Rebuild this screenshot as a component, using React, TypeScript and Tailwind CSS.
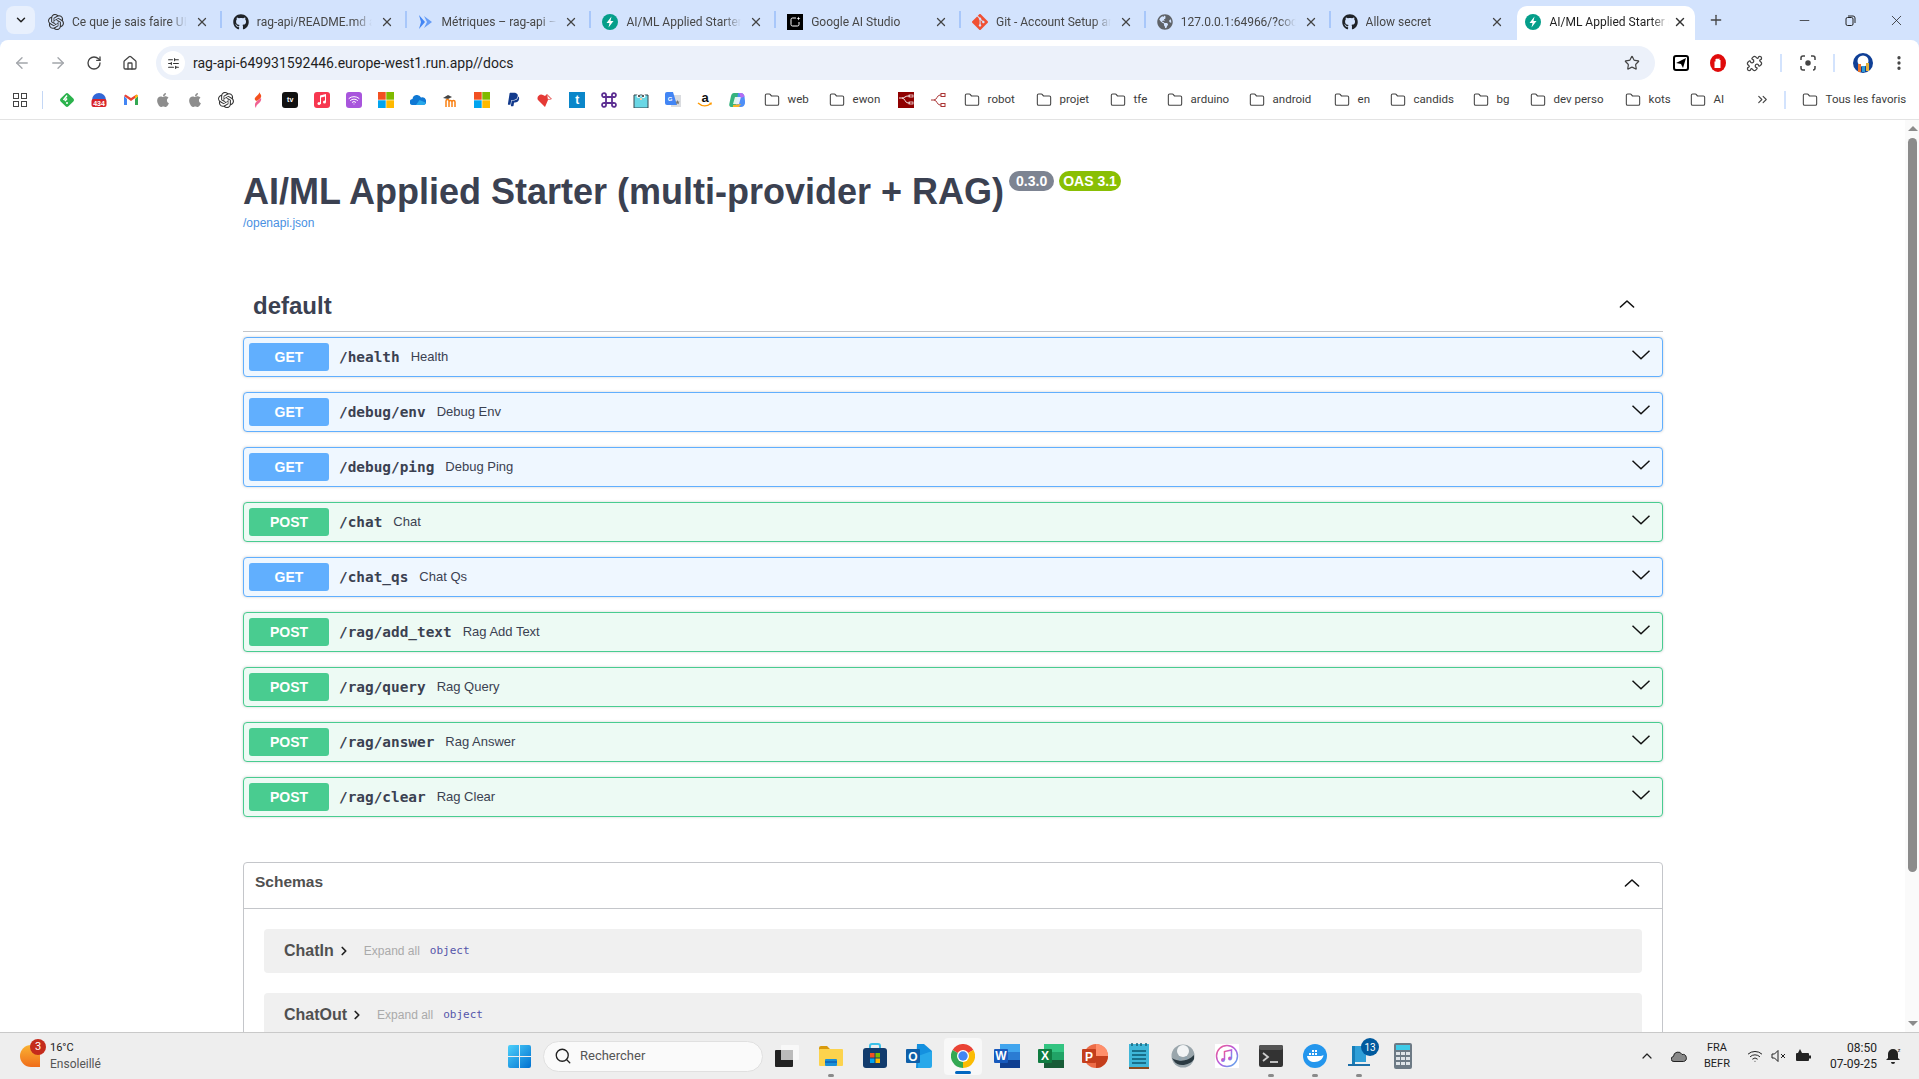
import type { ReactNode } from "react";
import {
  ArrowLeft,
  ArrowRight,
  ChevronDown,
  ChevronRight,
  ChevronUp,
  ChevronsRight,
  EllipsisVertical,
  Folder,
  House,
  Minus,
  Plus,
  Puzzle,
  RotateCw,
  Search,
  SlidersHorizontal,
  Star,
  Wifi,
  X,
} from "lucide-react";
import { FaApple, FaGithub, FaGlobeAmericas, FaPaypal } from "react-icons/fa";
import { SiGit, SiOpenai } from "react-icons/si";

const FastApi = () => (
  <svg width="16" height="16" viewBox="0 0 16 16">
    <circle cx="8" cy="8" r="8" fill="#059e8a" />
    <path d="M9.5 2.5 4.5 9h3l-1 4.5L11.5 7h-3z" fill="#fff" />
  </svg>
);

const CloudRun = () => (
  <svg width="16" height="16" viewBox="0 0 16 16">
    <path d="M1 1l6 7-6 7 2-7z" fill="#4285f4" />
    <path d="M6 2l8 6-8 6 3-6z" fill="#669df6" />
  </svg>
);

const AiStudio = () => (
  <svg width="16" height="16" viewBox="0 0 16 16">
    <rect width="16" height="16" fill="#000" />
    <path d="M9 4H5.5A1.5 1.5 0 0 0 4 5.500v5A1.500 1.500 0 0 0 5.500 12h5a1.500 1.500 0 0 0 1.500-1.500V8" fill="none" stroke="#fff" />
    <path d="M11.500 2.500c.2 1.300.7 1.800 2 2-1.300.2-1.800.7-2 2-.2-1.300-.7-1.800-2-2 1.300-.2 1.800-.7 2-2z" fill="#fff" />
  </svg>
);

type Tab = { icon: ReactNode; title: string };

const tabs: Tab[] = [
  { icon: <SiOpenai size={16} color="#333" />, title: "Ce que je sais faire UI/UX" },
  { icon: <FaGithub size={16} color="#1f2328" />, title: "rag-api/README.md at main" },
  { icon: <CloudRun />, title: "Métriques – rag-api – Cloud" },
  { icon: <FastApi />, title: "AI/ML Applied Starter (multi" },
  { icon: <AiStudio />, title: "Google AI Studio" },
  { icon: <SiGit size={16} color="#f05033" />, title: "Git - Account Setup and Config" },
  { icon: <FaGlobeAmericas size={16} color="#5f6368" />, title: "127.0.0.1:64966/?code=abc" },
  { icon: <FaGithub size={16} color="#1f2328" />, title: "Allow secret" },
];

function TabItem({ tab, last }: { tab: Tab; last: boolean }) {
  return (
    <div
      className={`flex h-[34px] w-[184.8px] shrink-0 items-center pb-[2px] pl-[11px] pr-[11px] ${
        last
          ? ""
          : "border-r-2 border-[#a8c7fa] [border-image:linear-gradient(to_bottom,transparent_18%,#a8c7fa_18%,#a8c7fa_65%,transparent_65%)_1]"
      }`}
    >
      <span className="flex w-4 shrink-0 justify-center">{tab.icon}</span>
      <span className="ml-2 w-[115px] overflow-hidden whitespace-nowrap text-xs text-[#474747] [mask-image:linear-gradient(to_right,black_85%,transparent)]">
        {tab.title}
      </span>
      <X size={14} strokeWidth={2.2} className="ml-auto text-[#444]" />
    </div>
  );
}

const GmailIcon = () => (
  <svg width="16" height="16" viewBox="0 0 16 16">
    <path d="M1 4v9h3V7z" fill="#4285f4" />
    <path d="M15 4v9h-3V7z" fill="#34a853" />
    <path d="M1 4l7 5 7-5-1.500-1.500L8 6 2.500 2.500z" fill="#ea4335" />
    <path d="M12 4v3l3-3-1-1.500z" fill="#fbbc04" />
  </svg>
);

const FeedlyIcon = () => (
  <svg width="16" height="16" viewBox="0 0 16 16">
    <rect x="2.500" y="2.500" width="11" height="11" rx="2" transform="rotate(45 8 8)" fill="#2bb24c" />
    <path d="M8 3.500 4.500 8M8 6.500 6 9M7 11h2" stroke="#fff" strokeWidth="1.500" fill="none" />
  </svg>
);

const BadgeIcon = () => (
  <svg width="16" height="16" viewBox="0 0 16 16">
    <path d="M1 8a7 7 0 0 1 14 0z" fill="#3367d6" />
    <rect x="0.500" y="7" width="15" height="8" rx="2" fill="#d8232a" />
    <text x="8" y="13.500" textAnchor="middle" fontSize="7" fontWeight="700" fill="#fff" fontFamily="Liberation Sans">434</text>
  </svg>
);

const MsIcon = ({ size = 16 }: { size?: number }) => (
  <svg width={size} height={size} viewBox="0 0 16 16">
    <rect width="7.700" height="7.700" fill="#f25022" />
    <rect x="8.300" width="7.700" height="7.700" fill="#7fba00" />
    <rect y="8.300" width="7.700" height="7.700" fill="#00a4ef" />
    <rect x="8.300" y="8.300" width="7.700" height="7.700" fill="#ffb900" />
  </svg>
);

const FlameIcon = () => (
  <svg width="16" height="16" viewBox="0 0 16 16">
    <path d="M9 0c1 2-3 4-4 6-.8 1.600 0 2.500 2 3 2-2 5-3 4-6z" fill="#f4511e" />
    <path d="M11 6c1 3-2 5-4 7-.5.7-1 1.500-1 3-2-3-1-5 1-7z" fill="#f06292" />
  </svg>
);

const AppIcon = ({ bg, children }: { bg: string; children: ReactNode }) => (
  <span className={`flex h-4 w-4 items-center justify-center rounded-[3px] ${bg}`}>{children}</span>
);

const MusicNote = () => (
  <svg width="10" height="11" viewBox="0 0 10 11" fill="#fff">
    <path d="M3 1.500 9 0v8H8V2.500L4 3.500V10H3z" />
    <circle cx="2" cy="9.500" r="1.500" />
    <circle cx="7.500" cy="8" r="1.500" />
  </svg>
);

const OneDriveIcon = () => (
  <svg width="16" height="16" viewBox="0 0 16 16">
    <path d="M3 13a3 3 0 0 1-.5-6A4.500 4.500 0 0 1 11 5.500a3.500 3.500 0 0 1 2.500 7.500z" fill="#0f78d4" />
    <path d="M6 13l3.500-5 6 2.500c.5 1.500-.5 2.500-2 2.500z" fill="#28a8ea" />
  </svg>
);

const MoodleIcon = () => (
  <svg width="16" height="16" viewBox="0 0 16 16">
    <path d="M1 6l5-3 4 2-4 2z" fill="#444" />
    <path d="M4 15V9c0-2 3-2 3 0v6M7 10c0-2 3-2 3 0v5M10 10c0-2 3-2 3 0v5" fill="none" stroke="#f98012" strokeWidth="1.500" />
  </svg>
);

const HeartTagIcon = () => (
  <svg width="16" height="16" viewBox="0 0 16 16">
    <path d="M8 15 1 8c-2-3 2-7 5-5l2 1 2-2 5 5-4 1z" fill="#e53935" />
    <path d="M10 3l4 4-3 .5z" fill="#fff" stroke="#e57373" strokeWidth=".5" />
  </svg>
);

const CommandIcon = () => (
  <svg width="16" height="16" viewBox="0 0 16 16" fill="none" stroke="#5b2d91" strokeWidth="1.800">
    <path d="M5 5h6v6H5zM5 5H3.500A2 2 0 1 1 5 3.500zM11 5V3.500A2 2 0 1 1 12.500 5zM11 11h1.500a2 2 0 1 1-1.500 1.500zM5 11v1.500A2 2 0 1 1 3.500 11z" />
  </svg>
);

const GopherIcon = () => (
  <svg width="16" height="16" viewBox="0 0 16 16">
    <path d="M1 3h14v13H1z" fill="#6ad7e5" stroke="#37474f" />
    <circle cx="5.500" cy="4" r="2" fill="#fff" />
    <circle cx="10.500" cy="4" r="2" fill="#fff" />
    <circle cx="6" cy="4" r="1" fill="#222" />
    <circle cx="10" cy="4" r="1" fill="#222" />
    <path d="M7 6h2v2H7z" fill="#f6d2a2" />
  </svg>
);

const TranslateIcon = () => (
  <svg width="16" height="16" viewBox="0 0 16 16">
    <rect x="6" y="3" width="10" height="12" fill="#dadce0" />
    <path d="M0 2a2 2 0 0 1 2-2h6l4 13H2a2 2 0 0 1-2-2z" fill="#4285f4" />
    <text x="5" y="9" textAnchor="middle" fontSize="6" fontWeight="700" fill="#fff" fontFamily="Liberation Sans">G</text>
    <path d="M12.500 8l.7 1.500 1.500.2-1.100 1 .3 1.600-1.400-.8-1.400.8.3-1.600-1.100-1 1.500-.2z" fill="#777" />
  </svg>
);

const AmazonIcon = () => (
  <svg width="16" height="16" viewBox="0 0 16 16">
    <text x="8" y="9.500" textAnchor="middle" fontSize="13" fontWeight="700" fill="#111" fontFamily="Liberation Sans">a</text>
    <path d="M1 11c4 3.500 9 3.500 13 .5" stroke="#f90" strokeWidth="1.400" fill="none" />
    <path d="M12 10.800l3-.3-.8 2.700z" fill="#f90" />
  </svg>
);

const CopilotIcon = () => (
  <svg width="16" height="16" viewBox="0 0 16 16">
    <path d="M5 1h5l-3 14H3c-3 0-3-2-2.500-4L2 4c.5-2 1.500-3 3-3z" fill="#36b37e" />
    <path d="M9 1h3c2 0 3 1.500 3.500 3.500L16 9c.5 3-1 6-4 6H7z" fill="#4f8ff7" />
    <path d="M6 5h6l-2 7H4z" fill="#fff" opacity=".85" />
    <path d="M10 1h2c2 0 3 2 3.500 3.500L12 6z" fill="#b66df2" />
    <path d="M4 15h6l2-3-8 1z" fill="#f7b32b" />
  </svg>
);

const NodeRedSquare = () => (
  <svg width="16" height="16" viewBox="0 0 16 16">
    <rect width="16" height="16" fill="#8f0000" />
    <path d="M1 6h3c3 0 3 5 6 5h2M4 6c3 0 3-2 6-2h2" stroke="#fff" strokeWidth=".9" fill="none" />
    <rect x="11" y="3" width="4" height="2" fill="none" stroke="#fff" strokeWidth=".7" />
    <rect x="11" y="10" width="4" height="2" fill="none" stroke="#fff" strokeWidth=".7" />
  </svg>
);

const NodeRedLine = () => (
  <svg width="16" height="16" viewBox="0 0 16 16" fill="none" stroke="#a33" strokeWidth="1">
    <path d="M1 8h3c3 0 3 5 6 5h1M4 8c3 0 3-5 6-5h1" />
    <rect x="11" y="1.500" width="4" height="3" />
    <rect x="11" y="11.500" width="4" height="3" />
  </svg>
);

const favIcons: ReactNode[] = [
  <FeedlyIcon />,
  <BadgeIcon />,
  <GmailIcon />,
  <FaApple size={16} color="#8d8d8d" />,
  <FaApple size={16} color="#8d8d8d" />,
  <SiOpenai size={16} color="#333" />,
  <FlameIcon />,
  <AppIcon bg="bg-[#111]">
    <span className="font-['Liberation_Sans'] text-[7px] font-bold leading-none text-white"> tv</span>
  </AppIcon>,
  <AppIcon bg="bg-[#f7374f]">
    <MusicNote />
  </AppIcon>,
  <AppIcon bg="bg-[#a855dc]">
    <Wifi size={12} color="#fff" />
  </AppIcon>,
  <MsIcon />,
  <OneDriveIcon />,
  <MoodleIcon />,
  <MsIcon />,
  <FaPaypal size={15} color="#123a8c" />,
  <HeartTagIcon />,
  <span className="flex h-4 w-4 items-center justify-center bg-[#0a86c9] font-['Liberation_Sans'] text-[12px] font-bold leading-none text-white">t</span>,
  <CommandIcon />,
  <GopherIcon />,
  <TranslateIcon />,
  <AmazonIcon />,
  <CopilotIcon />,
];

const BookmarkFolder = ({ label, width }: { label: string; width: string }) => (
  <div className={`flex shrink-0 items-center gap-2 ${width}`}>
    <Folder size={16} strokeWidth={1.6} className="shrink-0 text-[#444]" />
    <span className="whitespace-nowrap text-[11.5px] text-[#3c3c3c]">{label}</span>
  </div>
);

function BrowserChrome() {
  return (
    <div className="shrink-0 bg-[#d3e3fd] font-['Roboto',sans-serif]">
      <div className="flex h-10 items-end">
        <div className="mb-[6px] ml-[6px] flex h-7 w-[29px] shrink-0 items-center justify-center rounded-lg bg-[#e8f0fd]">
          <ChevronDown size={14} strokeWidth={2.5} className="text-[#222]" />
        </div>
        <div className="ml-[2px] flex h-10 items-start pt-[6px]">
          {tabs.map((t, i) => (
            <TabItem key={i} tab={t} last={i === tabs.length - 1} />
          ))}
        </div>
        <div className="ml-[2px] flex h-[34px] w-[178px] shrink-0 items-center rounded-t-[10px] bg-white pb-[2px] pl-2 pr-2">
          <FastApi />
          <span className="ml-2 w-[120px] overflow-hidden whitespace-nowrap text-xs text-[#1f1f1f] [mask-image:linear-gradient(to_right,black_85%,transparent)]">
            AI/ML Applied Starter (multi
          </span>
          <X size={14} strokeWidth={2.4} className="ml-auto text-[#333]" />
        </div>
        <div className="mb-[6px] ml-[13px] flex h-7 w-[16px] items-center justify-center">
          <Plus size={16} strokeWidth={2} className="text-[#444]" />
        </div>
        <div className="mb-[6px] ml-auto flex h-7 items-center">
          <div className="flex w-[46px] justify-center"><Minus size={15} strokeWidth={1.2} className="text-[#222]" /></div>
          <div className="flex w-[46px] justify-center">
            <svg width="11" height="11" viewBox="0 0 11 11" fill="none" stroke="#222" strokeWidth="1">
              <rect x="1" y="2.500" width="7" height="8" rx="1.500" />
              <path d="M3 1h5a2 2 0 0 1 2 2v5" />
            </svg>
          </div>
          <div className="flex w-[46px] justify-center"><X size={17} strokeWidth={1.1} className="text-[#222]" /></div>
        </div>
      </div>

      <div className="rounded-t-lg bg-white">
        <div className="flex h-10 items-center pt-[6px]">
          <div className="flex w-[150px] shrink-0 items-center pl-[13px]">
            <ArrowLeft size={18} strokeWidth={1.8} className="text-[#a3a6ab]" />
            <ArrowRight size={18} strokeWidth={1.8} className="ml-[18px] text-[#a3a6ab]" />
            <RotateCw size={16} strokeWidth={2} className="ml-[19px] text-[#444]" />
            <House size={16} strokeWidth={1.9} className="ml-[20px] text-[#444]" />
          </div>
          <div className="ml-[6px] flex h-[34px] w-[1499px] shrink-0 items-center rounded-full bg-[#ecf1fa] pl-[5px] pr-[15px]">
            <span className="flex h-6 w-6 items-center justify-center rounded-full bg-white">
              <SlidersHorizontal size={13} strokeWidth={2} className="text-[#333]" />
            </span>
            <span className="ml-2 text-sm text-[#1f1f1f]">rag-api-649931592446.europe-west1.run.app//docs</span>
            <Star size={16} strokeWidth={1.8} className="ml-auto text-[#444]" />
          </div>
          <div className="ml-[18px] flex items-center">
            <span className="flex h-4 w-4 items-center justify-center rounded-[3px] border-2 border-black">
              <svg width="10" height="10" viewBox="0 0 10 10"><path d="M0 5 10 0 7 10 5 6z" fill="#000" /></svg>
            </span>
            <svg width="16" height="18" viewBox="0 0 16 18" className="ml-[21px]">
              <ellipse cx="8" cy="9" rx="8" ry="9" fill="#e00b0b" />
              <path d="M4.500 14V7.500h1V5h1v-.5h1V5h1v-.5h1V6h1v8z" fill="#fff" />
            </svg>
            <Puzzle size={17} strokeWidth={1.8} className="ml-5 text-[#444]" />
            <div className="ml-[17px] h-[18px] w-[2px] bg-[#d3e3fd]" />
            <svg width="16" height="16" viewBox="0 0 16 16" fill="none" stroke="#444" strokeWidth="1.500" className="ml-[18px]">
              <path d="M1 5V3a2 2 0 0 1 2-2h2M11 1h2a2 2 0 0 1 2 2v2M1 11v2a2 2 0 0 0 2 2h2M13 15a2 2 0 0 0 2-2v-2" />
              <circle cx="8" cy="8" r="2" fill="#444" />
            </svg>
            <div className="ml-[17px] h-[18px] w-[2px] bg-[#d3e3fd]" />
            <svg width="20" height="20" viewBox="0 0 20 20" className="ml-[18px]">
              <circle cx="10" cy="10" r="10" fill="#0f3f96" />
              <circle cx="10" cy="8" r="5.500" fill="#fff" />
              <rect x="5" y="11" width="3" height="8" fill="#e8742c" />
              <rect x="9" y="13" width="3" height="6" fill="#2d9bd4" />
              <rect x="13" y="10" width="3" height="8" fill="#e2b13c" />
            </svg>
            <EllipsisVertical size={18} strokeWidth={2.4} className="ml-[17px] text-[#444]" />
          </div>
        </div>

        <div className="flex h-10 items-center border-b border-[#e3e3e3] font-['Roboto',sans-serif]">
          <div className="ml-[13px] grid h-[14px] w-[14px] shrink-0 grid-cols-2 gap-[2px]">
            <span className="border-[1.5px] border-[#444]" />
            <span className="border-[1.5px] border-[#444]" />
            <span className="border-[1.5px] border-[#444]" />
            <span className="border-[1.5px] border-[#444]" />
          </div>
          <div className="ml-[15px] h-[18px] w-[1px] shrink-0 bg-[#c4d7f5]" />
          <div className="ml-[8px] flex shrink-0 items-center">
            {favIcons.map((icon, i) => (
              <span key={i} className="flex w-[31.9px] shrink-0 justify-center">{icon}</span>
            ))}
          </div>
          <div className="ml-[11px] flex shrink-0 items-center">
            <BookmarkFolder label="web" width="w-[65px]" />
            <BookmarkFolder label="ewon" width="w-[61px]" />
            <span className="flex w-8 justify-center"><NodeRedSquare /></span>
            <span className="flex w-8 justify-center"><NodeRedLine /></span>
            <div className="w-[10px]" />
            <BookmarkFolder label="robot" width="w-[72px]" />
            <BookmarkFolder label="projet" width="w-[74px]" />
            <BookmarkFolder label="tfe" width="w-[57px]" />
            <BookmarkFolder label="arduino" width="w-[82px]" />
            <BookmarkFolder label="android" width="w-[85px]" />
            <BookmarkFolder label="en" width="w-[56px]" />
            <BookmarkFolder label="candids" width="w-[83px]" />
            <BookmarkFolder label="bg" width="w-[57px]" />
            <BookmarkFolder label="dev perso" width="w-[95px]" />
            <BookmarkFolder label="kots" width="w-[65px]" />
            <BookmarkFolder label="AI" width="w-[65px]" />
            <ChevronsRight size={15} strokeWidth={1.8} className="text-[#444]" />
            <div className="ml-[14px] h-[18px] w-[2px] bg-[#d3e3fd]" />
            <div className="ml-[16px]"><BookmarkFolder label="Tous les favoris" width="w-[100px]" /></div>
          </div>
        </div>
      </div>
    </div>
  );
}

type Op = { method: "GET" | "POST"; path: string; summary: string };

const ops: Op[] = [
  { method: "GET", path: "/health", summary: "Health" },
  { method: "GET", path: "/debug/env", summary: "Debug Env" },
  { method: "GET", path: "/debug/ping", summary: "Debug Ping" },
  { method: "POST", path: "/chat", summary: "Chat" },
  { method: "GET", path: "/chat_qs", summary: "Chat Qs" },
  { method: "POST", path: "/rag/add_text", summary: "Rag Add Text" },
  { method: "POST", path: "/rag/query", summary: "Rag Query" },
  { method: "POST", path: "/rag/answer", summary: "Rag Answer" },
  { method: "POST", path: "/rag/clear", summary: "Rag Clear" },
];

function OpRow({ op }: { op: Op }) {
  const isGet = op.method === "GET";
  return (
    <div
      className={`flex h-10 items-center rounded border pl-[5px] pr-[12px] shadow-[0_0_3px_rgba(0,0,0,0.19)] ${
        isGet ? "border-[#61affe] bg-[#eff7ff]" : "border-[#49cc90] bg-[#edfaf4]"
      }`}
    >
      <span
        className={`flex h-7 w-20 shrink-0 items-center justify-center rounded-[3px] text-sm font-bold text-white ${
          isGet ? "bg-[#61affe]" : "bg-[#49cc90]"
        }`}
      >
        {op.method}
      </span>
      <span className="ml-[10px] mt-[2px] font-['DejaVu_Sans_Mono',monospace] text-[14.4px] font-bold text-[#3b4151]">{op.path}</span>
      <span className="ml-[11px] text-[13px] text-[#3b4151]">{op.summary}</span>
      <svg width="18" height="10" viewBox="0 0 18 10" fill="none" stroke="#111" strokeWidth="1.500" className="ml-auto mb-[5px]">
        <path d="M0.500 0.800 9 8.800 17.500 0.800" />
      </svg>
    </div>
  );
}

const ModelBox = ({ name }: { name: string }) => (
  <div className="flex h-11 items-center rounded bg-[#f0f0f0] pl-[20px]">
    <span className="text-base font-bold text-[#505050]">{name}</span>
    <ChevronRight size={14} strokeWidth={3} className="ml-[3px] text-[#222]" />
    <span className="ml-[13px] text-xs text-[#aaaaaa]">Expand all</span>
    <span className="ml-[10px] mt-[1px] font-['DejaVu_Sans_Mono',monospace] text-[11px] text-[#55a]">object</span>
  </div>
);

function SwaggerPage() {
  return (
    <div className="flex min-h-0 flex-1 bg-white font-['Liberation_Sans',sans-serif]">
      <div className="min-w-0 flex-1 overflow-hidden">
        <div className="ml-[243px] w-[1420px] pt-[50px]">
          <div className="flex h-[44px] items-start">
            <h1 className="whitespace-nowrap text-[36px] font-bold leading-[44px] text-[#3b4151]">
              AI/ML Applied Starter (multi-provider + RAG)
            </h1>
            <span className="ml-[5px] mt-[1px] rounded-[57px] bg-[#7d8492] px-[7px] py-[2px] text-sm font-bold leading-4 text-white">0.3.0</span>
            <span className="ml-[5px] mt-[1px] rounded-[57px] bg-[#89bf04] px-1 py-[2px] text-sm font-bold leading-4 text-white">OAS 3.1</span>
          </div>
          <div className="mt-[1px] text-xs leading-4 text-[#4990e2]">/openapi.json</div>

          <div className="mt-[52px] flex h-[49px] items-center border-b border-[#c4c6ca] pb-[2px] pl-[10px]">
            <span className="text-2xl font-bold text-[#3b4151]">default</span>
            <ChevronUp size={24} strokeWidth={1.4} className="ml-auto mr-[24px] mt-[-4px] scale-x-[1.1] text-[#111]" />
          </div>

          <div className="mt-[5px] flex flex-col gap-[15px]">
            {ops.map((op) => (
              <OpRow key={op.path} op={op} />
            ))}
          </div>

          <div className="mt-[45px] rounded border border-[#c4c6ca] pb-8">
            <div className="flex h-[46px] items-center border-b border-[#c4c6ca] pb-[7px] pl-[11px]">
              <span className="text-[15.5px] font-bold text-[#505050]">Schemas</span>
              <ChevronUp size={24} strokeWidth={1.4} className="ml-auto mr-[18px] mt-[2px] scale-x-[1.1] text-[#111]" />
            </div>
            <div className="mt-5 flex flex-col gap-5 px-5">
              <ModelBox name="ChatIn" />
              <ModelBox name="ChatOut" />
            </div>
          </div>
        </div>
      </div>
      <div className="flex w-[14px] shrink-0 flex-col items-center bg-[#fafafa] pl-[1px]">
        <span className="mt-[6px] h-0 w-0 border-x-[5px] border-b-[5px] border-x-transparent border-b-[#8b8b8b]" />
        <span className="mt-[7px] h-[734px] w-[9px] rounded-t-[5px] rounded-b-[5px] bg-[#8b8b8b]" />
        <span className="mt-auto mb-[6px] h-0 w-0 border-x-[5px] border-t-[5px] border-x-transparent border-t-[#8b8b8b]" />
      </div>
    </div>
  );
}

const WindowsLogo = () => (
  <svg width="23" height="23" viewBox="0 0 23 23">
    <defs>
      <linearGradient id="win" x1="0" y1="0" x2="1" y2="1">
        <stop offset="0" stopColor="#4cd0fb" />
        <stop offset="1" stopColor="#0070d0" />
      </linearGradient>
    </defs>
    <path d="M0 2a2 2 0 0 1 2-2h9v11H0zM12 0h9a2 2 0 0 1 2 2v9H12zM0 12h11v11H2a2 2 0 0 1-2-2zM12 12h11v9a2 2 0 0 1-2 2h-9z" fill="url(#win)" />
  </svg>
);

const TaskView = () => (
  <svg width="24" height="22" viewBox="0 0 24 22">
    <rect x="6" y="0" width="18" height="15" rx="1" fill="#f8f8f8" />
    <rect x="0" y="5" width="18" height="17" rx="1" fill="#222" />
    <rect x="6" y="5" width="12" height="10" fill="#bbb" />
  </svg>
);

const FileExplorer = () => (
  <svg width="24" height="24" viewBox="0 0 24 24">
    <path d="M0 4a2 2 0 0 1 2-2h6l3 3H2v2H0z" fill="#d99a0c" />
    <rect y="5" width="24" height="17" rx="1" fill="#fcd34d" />
    <rect x="6" y="15" width="12" height="7" rx="1" fill="#1a8fd6" />
    <rect x="6" y="17" width="12" height="2" fill="#0f6cbd" />
  </svg>
);

const StoreIcon = () => (
  <svg width="24" height="26" viewBox="0 0 24 26">
    <path d="M7 5V3a2 2 0 0 1 2-2h6a2 2 0 0 1 2 2v2" stroke="#3bc1e8" strokeWidth="2" fill="none" />
    <rect y="5" width="24" height="20" rx="3" fill="#123c6d" />
    <rect x="7" y="10" width="4.500" height="4.500" fill="#f25022" />
    <rect x="12.500" y="10" width="4.500" height="4.500" fill="#7fba00" />
    <rect x="7" y="15.500" width="4.500" height="4.500" fill="#00a4ef" />
    <rect x="12.500" y="15.500" width="4.500" height="4.500" fill="#ffb900" />
  </svg>
);

const OfficeIcon = ({ letter, box, a, b, c }: { letter: string; box: string; a: string; b: string; c: string }) => (
  <svg width="26" height="26" viewBox="0 0 26 26">
    <rect x="6" y="1" width="20" height="8" fill={a} />
    <rect x="6" y="9" width="20" height="8" fill={b} />
    <rect x="6" y="17" width="20" height="8" fill={c} />
    <rect y="6" width="14" height="14" rx="1" fill={box} />
    <text x="7" y="17" textAnchor="middle" fontSize="12" fontWeight="700" fill="#fff" fontFamily="Liberation Sans">{letter}</text>
  </svg>
);

const Outlook = () => (
  <svg width="26" height="26" viewBox="0 0 26 26">
    <path d="M11 1h7l8 7v9l-8 8h-8z" fill="#1490df" />
    <path d="M12 13l14-5v15a2 2 0 0 1-2 2H12z" fill="#28a8ea" />
    <rect y="6" width="14" height="14" rx="1" fill="#0f5fa8" />
    <text x="7" y="17.500" textAnchor="middle" fontSize="12" fontWeight="700" fill="#fff" fontFamily="Liberation Sans">O</text>
  </svg>
);

const Ppt = () => (
  <svg width="26" height="26" viewBox="0 0 26 26">
    <circle cx="14" cy="13" r="12" fill="#ed6c47" />
    <path d="M14 13h12a12 12 0 0 1-12 12z" fill="#c43e1c" />
    <path d="M14 1a12 12 0 0 1 12 12H14z" fill="#ff8f6b" />
    <rect y="6" width="14" height="14" rx="1" fill="#c43e1c" />
    <text x="7" y="17.500" textAnchor="middle" fontSize="12" fontWeight="700" fill="#fff" fontFamily="Liberation Sans">P</text>
  </svg>
);

const Chrome = () => (
  <svg width="24" height="24" viewBox="0 0 24 24">
    <path d="M12 12 1.600 6A12 12 0 0 1 22.400 6z" fill="#ea4335" />
    <path d="M12 12 22.400 6A12 12 0 0 1 12 24z" fill="#fbbc04" />
    <path d="M12 12 12 24A12 12 0 0 1 1.600 6z" fill="#34a853" />
    <circle cx="12" cy="12" r="6" fill="#fff" />
    <circle cx="12" cy="12" r="4.700" fill="#4285f4" />
  </svg>
);

const NotepadIcon = () => (
  <svg width="20" height="28" viewBox="0 0 20 28">
    <rect y="2" width="20" height="23" fill="#3fb6d8" />
    <rect y="25" width="20" height="2" fill="#8a4b1f" />
    <path d="M3 1v3M8 1v3M12 1v3M17 1v3" stroke="#17637b" strokeWidth="1.500" />
    <path d="M3 9h14M3 13h14M3 17h14M3 21h14" stroke="#0d5870" strokeWidth="1.500" />
  </svg>
);

const QuickTime = () => (
  <svg width="24" height="26" viewBox="0 0 24 26">
    <circle cx="12" cy="13" r="11.500" fill="#9aa6ac" />
    <circle cx="12" cy="8" r="6" fill="#f2f4f5" />
    <path d="M1 15c6 4 16 4 22-3v4c-3 6-16 9-20 2z" fill="#2b3a42" />
    <circle cx="9" cy="16" r="1.500" fill="#8fa4b0" />
    <circle cx="15" cy="15" r="1.500" fill="#8fa4b0" />
  </svg>
);

const Itunes = () => (
  <svg width="24" height="24" viewBox="0 0 24 24">
    <defs>
      <linearGradient id="itn" x1="0" y1="0" x2="1" y2="1">
        <stop offset="0" stopColor="#f25b8c" />
        <stop offset="0.5" stopColor="#b65be0" />
        <stop offset="1" stopColor="#4fb4ee" />
      </linearGradient>
    </defs>
    <rect width="24" height="24" fill="#fff" />
    <circle cx="12" cy="12" r="10.500" fill="#fff" stroke="url(#itn)" strokeWidth="1.500" />
    <path d="M9.500 16V7.500l7-1.500v8.500" fill="none" stroke="url(#itn)" strokeWidth="1.500" />
    <circle cx="8" cy="16" r="2" fill="url(#itn)" />
    <circle cx="15" cy="14.500" r="2" fill="url(#itn)" />
  </svg>
);

const TerminalIcon = () => (
  <svg width="24" height="22" viewBox="0 0 24 22">
    <rect width="24" height="22" rx="2" fill="#333" />
    <rect width="24" height="5" rx="2" fill="#555" />
    <path d="M4 8l5 4-5 4" stroke="#ccc" strokeWidth="1.800" fill="none" />
    <path d="M11 17h8" stroke="#eee" strokeWidth="1.500" />
  </svg>
);

const DockerIcon = () => (
  <svg width="24" height="24" viewBox="0 0 24 24">
    <circle cx="12" cy="12" r="12" fill="#2496ed" />
    <path d="M4 12h14c1 0 2-1 2.500-1-.5 4-4 7-9 7-4 0-7-2-7.500-6z" fill="#fff" />
    <path d="M6 9h2v2H6zM9 9h2v2H9zM12 9h2v2h-2zM9 6h2v2H9zM12 6h2v2h-2z" fill="#fff" />
  </svg>
);

const DeviceIcon = () => (
  <svg width="24" height="24" viewBox="0 0 24 24">
    <path d="M5 2h14v16H5z" fill="#2f9fd8" />
    <path d="M1 20h22v2H1z" fill="#1c6fa8" />
    <path d="M5 2h3v18H5z" fill="#177eb8" />
  </svg>
);

const Calculator = () => (
  <svg width="18" height="26" viewBox="0 0 18 26">
    <rect width="18" height="26" rx="2" fill="#6d7a85" />
    <rect x="2" y="2" width="14" height="5" fill="#3fcbe8" />
    <path d="M2 9h4v3H2zM7 9h4v3H7zM12 9h4v3h-4zM2 14h4v3H2zM7 14h4v3H7zM12 14h4v3h-4zM2 19h4v3H2zM7 19h4v3H7zM12 19h4v3h-4z" fill="#dfe4e8" />
  </svg>
);

type Dock = { icon: ReactNode; dot?: boolean; active?: boolean; badge?: string };

const dock: Dock[] = [
  { icon: <FileExplorer />, dot: true },
  { icon: <StoreIcon /> },
  { icon: <Outlook /> },
  { icon: <Chrome />, active: true },
  { icon: <OfficeIcon letter="W" box="#185abd" a="#41a5ee" b="#2b7cd3" c="#103f91" /> },
  { icon: <OfficeIcon letter="X" box="#107c41" a="#33c481" b="#21a366" c="#185c37" /> },
  { icon: <Ppt /> },
  { icon: <NotepadIcon /> },
  { icon: <QuickTime /> },
  { icon: <Itunes /> },
  { icon: <TerminalIcon />, dot: true },
  { icon: <DockerIcon />, dot: true },
  { icon: <DeviceIcon />, dot: true, badge: "13" },
  { icon: <Calculator /> },
];

function Taskbar() {
  return (
    <div className="flex h-[47px] shrink-0 items-center border-t border-[#c9c9c9] bg-[#eeeeee] font-['Roboto',sans-serif]">
      <div className="relative flex w-[497px] shrink-0 items-center pl-[20px]">
        <span className="h-[22px] w-[20px] rounded-l-full rounded-r-[9px] bg-gradient-to-b from-[#f9b233] to-[#ef6c1a]" />
        <span className="absolute left-[30px] top-[-1px] flex h-4 w-4 items-center justify-center rounded-full bg-[#c42b1c] text-[11px] text-white">3</span>
        <div className="ml-[10px] text-[11px] leading-4">
          <div className="text-[#1a1a1a]">16°C</div>
          <div className="text-[12px] text-[#555]">Ensoleillé</div>
        </div>
      </div>
      <div className="flex w-11 shrink-0 justify-center"><WindowsLogo /></div>
      <div className="ml-[2px] flex h-[31px] w-[220px] shrink-0 items-center rounded-full border border-[#e0e0e0] bg-[#fafafa] pl-[10px]">
        <Search size={18} strokeWidth={1.8} className="text-[#222]" />
        <span className="ml-2 text-[13px] text-[#555]">Rechercher</span>
      </div>
      <div className="flex w-11 shrink-0 justify-center pl-[4px]"><TaskView /></div>
      <div className="ml-[2px] flex h-full shrink-0">
        {dock.map((d, i) => (
          <div key={i} className="relative flex h-full w-11 items-center justify-center">
            {d.active && <span className="absolute inset-x-[3px] bottom-[4px] top-[5px] rounded bg-[#f8f8f8]" />}
            <span className="relative flex">{d.icon}</span>
            {d.dot && <span className="absolute bottom-[2px] h-[3px] w-[6px] rounded-full bg-[#8a8a8a]" />}
            {d.active && <span className="absolute bottom-[5px] h-[3px] w-[16px] rounded-full bg-[#0067c0]" />}
            {d.badge && (
              <span className="absolute left-[24px] top-[5px] flex h-[18px] w-[18px] items-center justify-center rounded-full bg-[#005a9e] text-[10px] text-white">{d.badge}</span>
            )}
          </div>
        ))}
      </div>
      <div className="ml-auto flex items-center pr-[10px] text-[#222]">
        <ChevronUp size={16} strokeWidth={1.8} className="mr-2" />
        <svg width="16" height="11" viewBox="0 0 16 11" className="ml-[8px] mr-1">
          <path d="M3 10.500a2.500 2.500 0 0 1-.5-5A4.500 4.500 0 0 1 11 3.500a3.500 3.500 0 0 1 1.500 7z" fill="#888" stroke="#222" />
        </svg>
        <div className="ml-[8px] w-9 text-center text-[11px] leading-4">
          <div>FRA</div>
          <div>BEFR</div>
        </div>
        <div className="ml-[8px] flex w-6 justify-center"><Wifi size={16} strokeWidth={1.5} /></div>
        <div className="flex w-6 justify-center">
          <svg width="16" height="14" viewBox="0 0 16 14" fill="none" stroke="#222" strokeWidth="1">
            <path d="M1 5h2.500L7 1.500v11L3.500 9H1zM10 5l4 4M14 5l-4 4" />
          </svg>
        </div>
        <div className="flex w-6 justify-center">
          <svg width="16" height="14" viewBox="0 0 16 14">
            <rect x="1" y="4" width="13" height="8" rx="1" fill="#222" />
            <rect x="14" y="6.500" width="2" height="3" fill="#222" />
            <path d="M5 0 3 4h4z" fill="#222" />
          </svg>
        </div>
        <div className="w-[62px] text-right text-[12px] leading-4">
          <div>08:50</div>
          <div>07-09-25</div>
        </div>
        <div className="flex w-8 justify-center">
          <svg width="16" height="18" viewBox="0 0 16 18">
            <path d="M8 2a5 5 0 0 1 5 5v4l2 2H1l2-2V7a5 5 0 0 1 5-5z" fill="#222" />
            <path d="M6 15h4a2 2 0 0 1-4 0z" fill="#222" />
            <text x="12.500" y="4.500" fontSize="6" fill="#222" fontFamily="Liberation Sans">z</text>
          </svg>
        </div>
      </div>
    </div>
  );
}

export default function App() {
  return (
    <div className="flex h-screen w-full flex-col overflow-hidden bg-white">
      <BrowserChrome />
      <SwaggerPage />
      <Taskbar />
    </div>
  );
}
